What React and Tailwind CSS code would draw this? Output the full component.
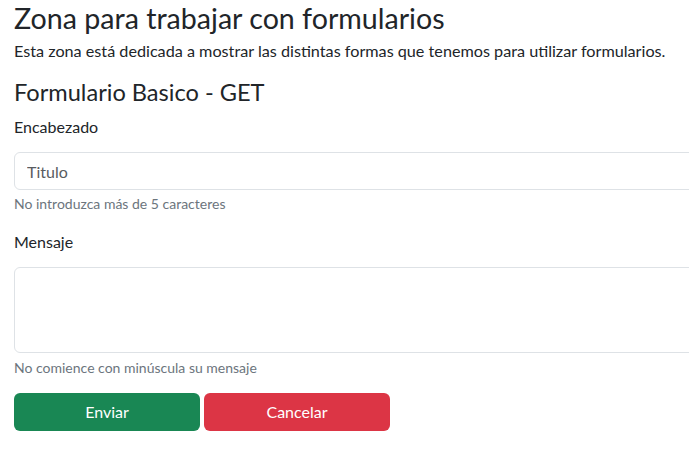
import React from "react";

export default function App() {
  return (
    <div className="w-[689px] h-[450px] overflow-hidden bg-white text-[#212529] font-['Lato',sans-serif]">
      <div className="pl-[14px] w-[740px]">
        <h1 className="text-[28.6px] leading-[36px] font-normal pt-[0px] mb-[3px]">Zona para trabajar con formularios</h1>
        <p className="text-[16.2px] leading-[24px] mb-[14px]">Esta zona está dedicada a mostrar las distintas formas que tenemos para utilizar formularios.</p>
        <h3 className="text-[23.6px] leading-[30px] font-normal mb-[8px]">Formulario Basico - GET</h3>
        <form className="flex flex-col">
          <label className="text-[16px] leading-[24px] mb-[13px]">Encabezado</label>
          <input
            type="text"
            placeholder="Titulo"
            className="h-[38px] border border-[#dee2e6] rounded-[6px] px-[12px] text-[16px] placeholder:text-[#595c5f] outline-none"
          />
          <div className="text-[14px] leading-[21px] text-[#6c757d] mt-[3px] mb-[16px]">No introduzca más de 5 caracteres</div>
          <label className="text-[16px] leading-[24px] mb-[13px]">Mensaje</label>
          <textarea className="h-[86px] border border-[#dee2e6] rounded-[6px] px-[12px] py-[6px] text-[16px] outline-none resize-none"></textarea>
          <div className="text-[14px] leading-[21px] text-[#6c757d] mt-[4px] mb-[15px]">No comience con minúscula su mensaje</div>
          <div className="flex gap-[4px]">
            <button type="button" className="w-[186px] h-[38px] rounded-[6px] bg-[#198754] text-white text-[16px]">Enviar</button>
            <button type="button" className="w-[186px] h-[38px] rounded-[6px] bg-[#dc3545] text-white text-[16px]">Cancelar</button>
          </div>
        </form>
      </div>
    </div>
  );
}
